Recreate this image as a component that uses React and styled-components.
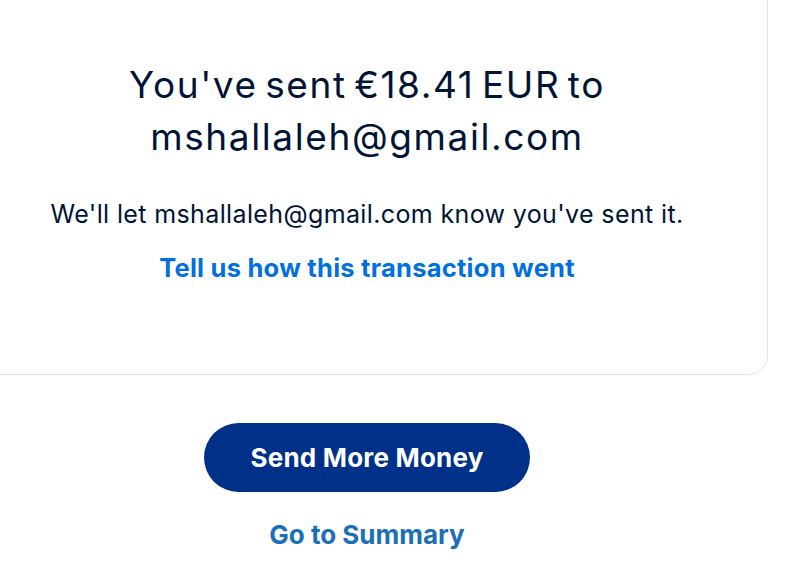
import React from "react";
import styled, { createGlobalStyle } from "styled-components";

const Global = createGlobalStyle`
  html, body { margin: 0; padding: 0; background: #ffffff; }
  body { font-family: Inter, "Noto Sans", sans-serif; overflow: hidden; }
`;

const Page = styled.div`
  width: 800px;
  height: 580px;
  overflow: hidden;
`;

const Main = styled.main`
  width: 802px;
  margin-left: -34px;
  display: flex;
  flex-direction: column;
  align-items: center;
`;

const Card = styled.section`
  box-sizing: border-box;
  width: 100%;
  margin-top: -40px;
  height: 415px;
  border: 1px solid #e4e4e4;
  border-radius: 20px;
  background: #fff;
  display: flex;
  flex-direction: column;
  align-items: center;
  padding-top: 98px;
`;

const Headline = styled.h1`
  margin: 0;
  font-size: 37px;
  line-height: 52px;
  font-weight: 400;
  color: #001435;
  text-align: center;
  letter-spacing: 1.6px;
  word-spacing: -4.5px;
`;

const Note = styled.p`
  margin: 36px 0 0;
  font-size: 25px;
  line-height: 30px;
  color: #001435;
  letter-spacing: 0.37px;
  white-space: nowrap;
`;

const TextLink = styled.a`
  display: block;
  margin-top: ${(p) => p.$top || 0}px;
  font-size: ${(p) => p.$size || 25.5}px;
  line-height: 30px;
  font-weight: 700;
  color: ${(p) => p.$color || "#0070e0"};
  text-decoration: none;
  letter-spacing: ${(p) => p.$spacing ?? 0.25}px;
  white-space: nowrap;
  cursor: pointer;
`;

const Button = styled.button`
  margin-top: 48px;
  width: 326px;
  height: 69px;
  padding: 0;
  border: none;
  border-radius: 35px;
  background: #003087;
  color: #fff;
  font-family: inherit;
  font-size: 26px;
  font-weight: 700;
  letter-spacing: 0.2px;
  cursor: pointer;
`;

export default function App() {
  return (
    <Page>
      <Global />
      <Main>
        <Card>
          <Headline>
            You've sent €18.41 EUR to
            <br />
            mshallaleh@gmail.com
          </Headline>
          <Note>We'll let mshallaleh@gmail.com know you've sent it.</Note>
          <TextLink $top={24}>Tell us how this transaction went</TextLink>
        </Card>
        <Button>Send More Money</Button>
        <TextLink $top={28} $size={26} $spacing={0} $color="#1b6fb8">
          Go to Summary
        </TextLink>
      </Main>
    </Page>
  );
}
